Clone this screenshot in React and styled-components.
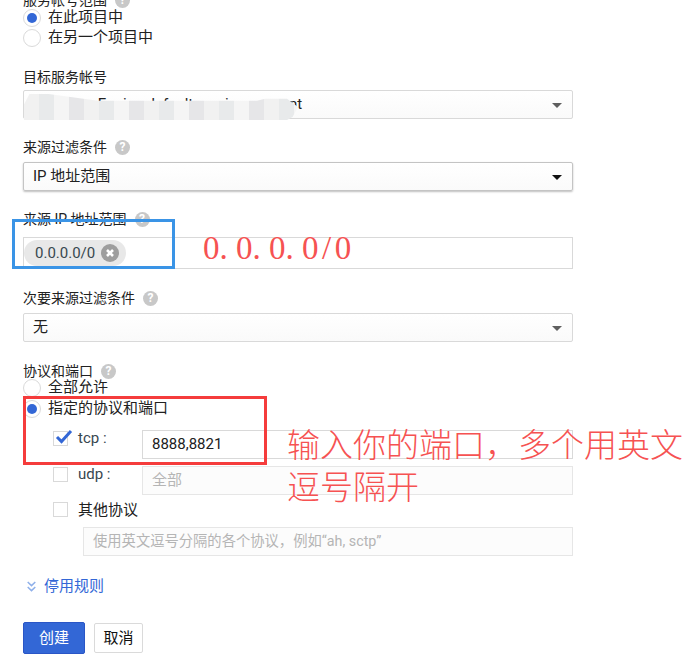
import React from 'react'
import styled, { createGlobalStyle } from 'styled-components'

const GlobalStyle = createGlobalStyle`
  html, body {
    margin: 0;
    background: #fff;
    overflow: hidden;
  }
  body {
    font-family: Roboto, "Noto Sans CJK SC", sans-serif;
    font-size: 15px;
    color: #212121;
  }
`

const Page = styled.div`
  position: relative;
  width: 695px;
  height: 672px;
  overflow: hidden;
`

const Form = styled.form`
  width: 550px;
  margin: -8px 0 0 23px;
  display: flex;
  flex-direction: column;
`

const Label = styled.div`
  height: 16px;
  line-height: 16px;
  font-size: 14px;
  display: flex;
  align-items: center;
  gap: 8px;
  margin-top: ${p => p.$top ?? 21}px;
  margin-bottom: ${p => p.$bottom ?? 7}px;
`

const Help = styled.span`
  width: 15px;
  height: 15px;
  border-radius: 50%;
  background: #c8c8c8;
  color: #fff;
  font-size: 12px;
  font-weight: 700;
  line-height: 15px;
  text-align: center;
`

const RadioRow = styled.label`
  height: 20px;
  display: flex;
  align-items: center;
  gap: 7px;
  margin-top: ${p => p.$top || 0}px;
`

const RadioText = styled.span`
  line-height: 20px;
  padding-bottom: 2px;
`

const RadioMark = styled.span`
  width: 18px;
  height: 18px;
  box-sizing: border-box;
  border: 1px solid #dadada;
  border-radius: 50%;
  background: #fff;
  display: flex;
  align-items: center;
  justify-content: center;
  &::after {
    content: '';
    width: 10px;
    height: 10px;
    border-radius: 50%;
    background: ${p => (p.$on ? '#3367d6' : 'transparent')};
  }
`

const Select = styled.div`
  position: relative;
  height: 29px;
  box-sizing: border-box;
  padding: 0 9px;
  line-height: 27px;
  border: 1px solid ${p => (p.$focus ? '#c4c4c4' : '#d9d9d9')};
  border-radius: 2px;
  background: linear-gradient(#fff, #fafafa);
  box-shadow: ${p => (p.$focus ? '0 1px 2px rgba(0,0,0,.25)' : 'none')};
  &::after {
    content: '';
    position: absolute;
    right: 10px;
    top: 12px;
    border-left: 5px solid transparent;
    border-right: 5px solid transparent;
    border-top: 5px solid ${p => (p.$focus ? '#111' : '#5f5f5f')};
  }
`

const BlurPatch = styled.div`
  position: absolute;
  left: 0;
  top: 3px;
  width: 274px;
  height: 26px;
  clip-path: polygon(2% 0, 9% 0, 27% 26%, 85% 26%, 88% 18%, 96% 18%, 100% 50%, 98% 88%, 96% 100%, 0 100%, 0 40%);
  background: repeating-linear-gradient(90deg, #f1f1f1 0 15px, #e8eaeb 15px 30px, #f5f5f5 30px 45px, #e6e6e8 45px 60px);
`

const ChipBox = styled.div`
  height: 32px;
  box-sizing: border-box;
  border: 1px solid #d9d9d9;
  padding: 2px 0 0 0;
  display: flex;
`

const Chip = styled.span`
  height: 26px;
  width: 102px;
  box-sizing: border-box;
  border-radius: 13px;
  background: #e8e8e8;
  padding: 0 7px 0 11px;
  display: flex;
  align-items: center;
  justify-content: space-between;
  color: #37474f;
`

const ChipClose = styled.svg`
  width: 18px;
  height: 18px;
  display: block;
`

const CheckRow = styled.div`
  height: 29px;
  display: flex;
  margin-top: ${p => p.$top}px;
  padding-left: 30px;
`

const CheckBox = styled.span`
  position: relative;
  width: 15px;
  height: 15px;
  box-sizing: border-box;
  border: 1px solid #d9d9d9;
  background: #fff;
  margin: ${p => p.$y || 0}px 10px 0 0;
  flex: none;
`

const Tick = styled.svg`
  position: absolute;
  left: 0;
  top: -5px;
  width: 19px;
  height: 18px;
`

const CheckText = styled.span`
  width: 64px;
  line-height: 16px;
  color: #37474f;
`

const Input = styled.div`
  flex: 1;
  height: 29px;
  box-sizing: border-box;
  border: 1px solid ${p => (p.$off ? '#e6e6e6' : '#d9d9d9')};
  background: ${p => (p.$off ? '#fcfcfc' : '#fff')};
  color: ${p => (p.$off ? '#b5b5b5' : '#212121')};
  padding: 0 9px;
  line-height: 27px;
  white-space: nowrap;
`

const OtherRow = styled.div`
  height: 16px;
  line-height: 16px;
  margin-top: 7px;
  padding-left: 30px;
  display: flex;
`

const OtherInput = styled(Input)`
  flex: none;
  margin: 9px 0 0 60px;
  font-size: 14.3px;
`

const DisableLink = styled.a`
  height: 16px;
  line-height: 16px;
  margin-top: 22px;
  padding-left: 4px;
  display: flex;
  align-items: center;
  gap: 8px;
  color: #3367d6;
`

const Actions = styled.div`
  margin-top: 28px;
  display: flex;
  align-items: center;
  gap: 9px;
`

const Button = styled.button`
  height: ${p => (p.$primary ? 32 : 30)}px;
  width: ${p => (p.$primary ? 62 : 49)}px;
  padding: 0 0 3px;
  box-sizing: border-box;
  border-radius: 2px;
  border: 1px solid ${p => (p.$primary ? '#2a56c6' : '#dadada')};
  background: ${p => (p.$primary ? '#3367d6' : '#fff')};
  color: ${p => (p.$primary ? '#fff' : '#111')};
  font: inherit;
`

const Frame = styled.div`
  position: absolute;
  left: ${p => p.$x}px;
  top: ${p => p.$y}px;
  width: ${p => p.$w}px;
  height: ${p => p.$h}px;
  box-sizing: border-box;
  border: 3px solid ${p => p.$color};
`

const Note = styled.div`
  position: absolute;
  left: ${p => p.$x}px;
  top: ${p => p.$y}px;
  color: #f65252;
  font-family: "Liberation Serif", "Noto Sans CJK SC", serif;
  font-size: 33px;
  font-weight: 300;
  line-height: 42px;
  white-space: pre;
`

const Slash = styled.span`
  margin: 0 3.5px;
`

const App = () => (
  <Page>
    <GlobalStyle />
    <Form>
      <Label $top={0} $bottom={0}>服务帐号范围 <Help>?</Help></Label>
      <RadioRow><RadioMark $on /><RadioText>在此项目中</RadioText></RadioRow>
      <RadioRow><RadioMark /><RadioText>在另一个项目中</RadioText></RadioRow>

      <Label $bottom={5}>目标服务帐号</Label>
      <Select>
        Compute Engine default service account
        <BlurPatch />
      </Select>

      <Label $top={20}>来源过滤条件 <Help>?</Help></Label>
      <Select $focus>IP 地址范围</Select>

      <Label $top={20} $bottom={10}>来源 IP 地址范围 <Help>?</Help></Label>
      <ChipBox>
        <Chip>
          0.0.0.0/0
          <ChipClose viewBox="0 0 18 18">
            <circle cx="9" cy="9" r="9" fill="#9e9e9e" />
            <path d="M6 6l6 6M12 6l-6 6" stroke="#fff" strokeWidth="2.6" />
          </ChipClose>
        </Chip>
      </ChipBox>

      <Label>次要来源过滤条件 <Help>?</Help></Label>
      <Select>无</Select>

      <Label $bottom={-1}>协议和端口 <Help>?</Help></Label>
      <RadioRow><RadioMark /><RadioText>全部允许</RadioText></RadioRow>
      <RadioRow $top={1}><RadioMark $on /><RadioText>指定的协议和端口</RadioText></RadioRow>

      <CheckRow $top={11}>
        <CheckBox $y={1}>
          <Tick viewBox="0 0 19 18">
            <path d="M3 10l4.5 4.5L17 4" fill="none" stroke="#3367d6" strokeWidth="3" />
          </Tick>
        </CheckBox>
        <CheckText>tcp :</CheckText>
        <Input>8888,8821</Input>
      </CheckRow>
      <CheckRow $top={7}>
        <CheckBox $y={1} />
        <CheckText>udp :</CheckText>
        <Input $off>全部</Input>
      </CheckRow>
      <OtherRow>
        <CheckBox />
        其他协议
      </OtherRow>
      <OtherInput $off>使用英文逗号分隔的各个协议，例如“ah, sctp”</OtherInput>

      <DisableLink>
        <svg width="9" height="11" viewBox="0 0 9 11" fill="none" stroke="#8fb0ea" strokeWidth="1.5">
          <path d="M.7 1l3.8 3.6L8.3 1M.7 6l3.8 3.6L8.3 6" />
        </svg>
        停用规则
      </DisableLink>

      <Actions>
        <Button $primary type="button">创建</Button>
        <Button type="button">取消</Button>
      </Actions>
    </Form>

    <Frame $x={12} $y={219} $w={163} $h={50} $color="#3a94e6" />
    <Frame $x={23} $y={396} $w={244} $h={69} $color="#f53c3c" />
    <Note $x={203} $y={227}>0. 0. 0. 0<Slash>/</Slash>0</Note>
    <Note $x={287} $y={425}>输入你的端口，多个用英文{'\n'}逗号隔开</Note>
  </Page>
)

export default App
